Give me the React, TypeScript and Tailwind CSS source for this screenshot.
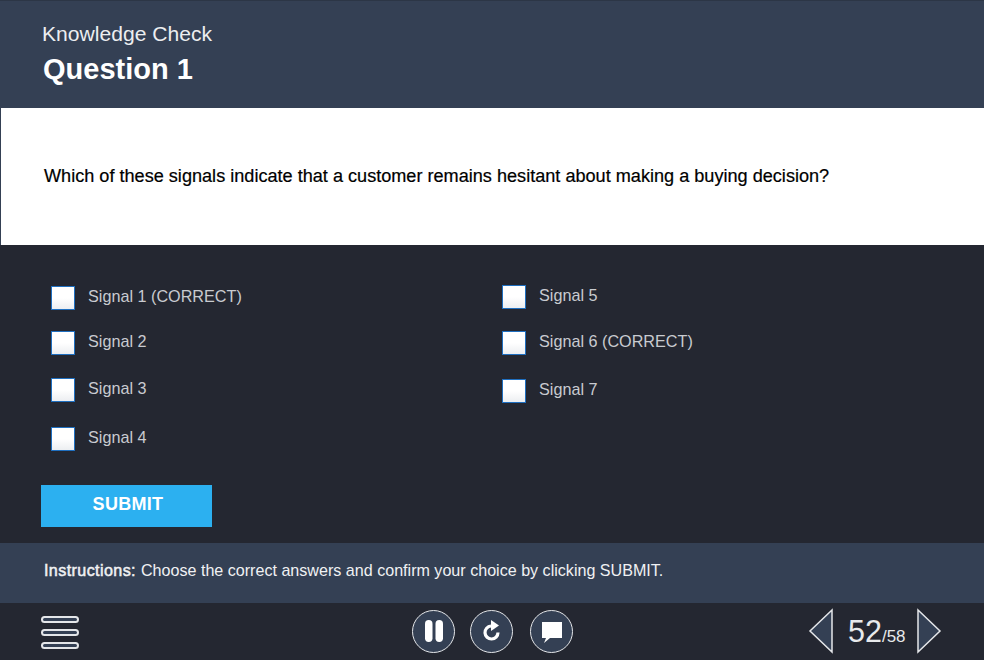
const leftSignals = [
  { label: "Signal 1 (CORRECT)", mt: "mt-0" },
  { label: "Signal 2", mt: "mt-[21px]" },
  { label: "Signal 3", mt: "mt-[23px]" },
  { label: "Signal 4", mt: "mt-[25px]" },
];

const rightSignals = [
  { label: "Signal 5", mt: "mt-0" },
  { label: "Signal 6 (CORRECT)", mt: "mt-[22px]" },
  { label: "Signal 7", mt: "mt-[24px]" },
];

const Signal = ({ label, mt }: { label: string; mt: string }) => (
  <div className={`flex items-center h-6 ${mt}`}>
    <span className="w-6 h-6 shrink-0 border border-[#1f6fc0] bg-gradient-to-b from-white via-white to-[#eceef1]" />
    <span className="ml-[13px] -mt-[4px] text-[16.2px] leading-6 text-[#c9cbd0]">{label}</span>
  </div>
);

const RoundButton = ({ children }: { children: React.ReactNode }) => (
  <button className="w-[43px] h-[43px] rounded-full border-[1.5px] border-[#e4e6e9] bg-[#344054] flex items-center justify-center">
    {children}
  </button>
);

export default function App() {
  return (
    <div className="w-[984px] h-[660px] flex flex-col overflow-hidden bg-[#242731] font-['Liberation_Sans',Arial,sans-serif]">
      <header className="h-[108px] shrink-0 bg-[#344054] pl-[42px] pt-[21px] border-t border-[#2c3646]">
        <div className="text-[21.1px] leading-6 text-[#eceef0]">Knowledge Check</div>
        <div className="mt-[5px] ml-[1px] text-[29px] leading-9 font-bold text-white">Question 1</div>
      </header>

      <section className="h-[137px] shrink-0 bg-white border-l border-[#344054] pl-[43px] pt-[56px]">
        <p className="text-[18.13px] leading-6 text-black [-webkit-text-stroke:0.2px_black]">
          Which of these signals indicate that a customer remains hesitant about making a buying decision?
        </p>
      </section>

      <main className="flex-1 pl-[41px] pt-[41px]">
        <div className="flex pl-[10px]">
          <div className="w-[451px]">
            {leftSignals.map((s) => (
              <Signal key={s.label} {...s} />
            ))}
          </div>
          <div className="-mt-[1px]">
            {rightSignals.map((s) => (
              <Signal key={s.label} {...s} />
            ))}
          </div>
        </div>
        <button className="mt-[34px] w-[171px] h-[42px] pb-[3px] pl-[3px] bg-[#2cb0f0] text-white text-[18px] font-bold tracking-[0.3px]">
          SUBMIT
        </button>
      </main>

      <section className="h-[60px] shrink-0 bg-[#344054] pl-[44px] pb-[5px] flex items-center text-[16.1px] text-[#f0f1f3]">
        <span className="tracking-[0.4px] [-webkit-text-stroke:0.5px_#f0f1f3]">Instructions:</span>
        <span className="ml-[5px]">Choose the correct answers and confirm your choice by clicking SUBMIT.</span>
      </section>

      <footer className="h-[57px] shrink-0 flex items-center relative">
        <div className="ml-[41px] flex flex-col gap-[6px] mt-[1px]">
          <span className="w-[38px] h-[7px] rounded-full border-2 border-[#e4e6e9] bg-[#344054]" />
          <span className="w-[38px] h-[7px] rounded-full border-2 border-[#e4e6e9] bg-[#344054]" />
          <span className="w-[38px] h-[7px] rounded-full border-2 border-[#e4e6e9] bg-[#344054]" />
        </div>

        <div className="ml-[333px] flex items-center -mt-[1px]">
          <RoundButton>
            <svg width="22" height="24" viewBox="0 0 22 24">
              <rect x="2" y="1" width="7.5" height="22" rx="3.7" fill="#fff" />
              <rect x="12.5" y="1" width="7.5" height="22" rx="3.7" fill="#fff" />
            </svg>
          </RoundButton>
          <div className="ml-[15px]">
            <RoundButton>
              <svg width="24" height="26" viewBox="0 0 24 26">
                <path d="M18 14.5 A6.5 6.5 0 1 1 11 8" fill="none" stroke="#fff" strokeWidth="3.2" />
                <path d="M11 2 L19 7.5 L11 13 Z" fill="#fff" />
              </svg>
            </RoundButton>
          </div>
          <div className="ml-[17px]">
            <RoundButton>
              <svg width="24" height="26" viewBox="0 0 24 26">
                <path d="M2 4 H22 V20 H10 L4 25 L6 20 H2 Z" fill="#fff" />
              </svg>
            </RoundButton>
          </div>
        </div>

        <div className="ml-auto mr-[42px] flex items-center -mt-[1px]">
          <svg width="26" height="46" viewBox="0 0 26 46">
            <path d="M24 2 L2 23 L24 44 Z" fill="#344054" stroke="#e4e6e9" strokeWidth="1.5" />
          </svg>
          <div className="ml-[14px] w-[56px] text-[#e8eaec] whitespace-nowrap">
            <span className="text-[30.5px] leading-9">52</span>
            <span className="text-[17px]">/58</span>
          </div>
          <svg className="ml-[12px]" width="26" height="46" viewBox="0 0 26 46">
            <path d="M2 2 L24 23 L2 44 Z" fill="#344054" stroke="#e4e6e9" strokeWidth="1.5" />
          </svg>
        </div>
      </footer>
    </div>
  );
}
